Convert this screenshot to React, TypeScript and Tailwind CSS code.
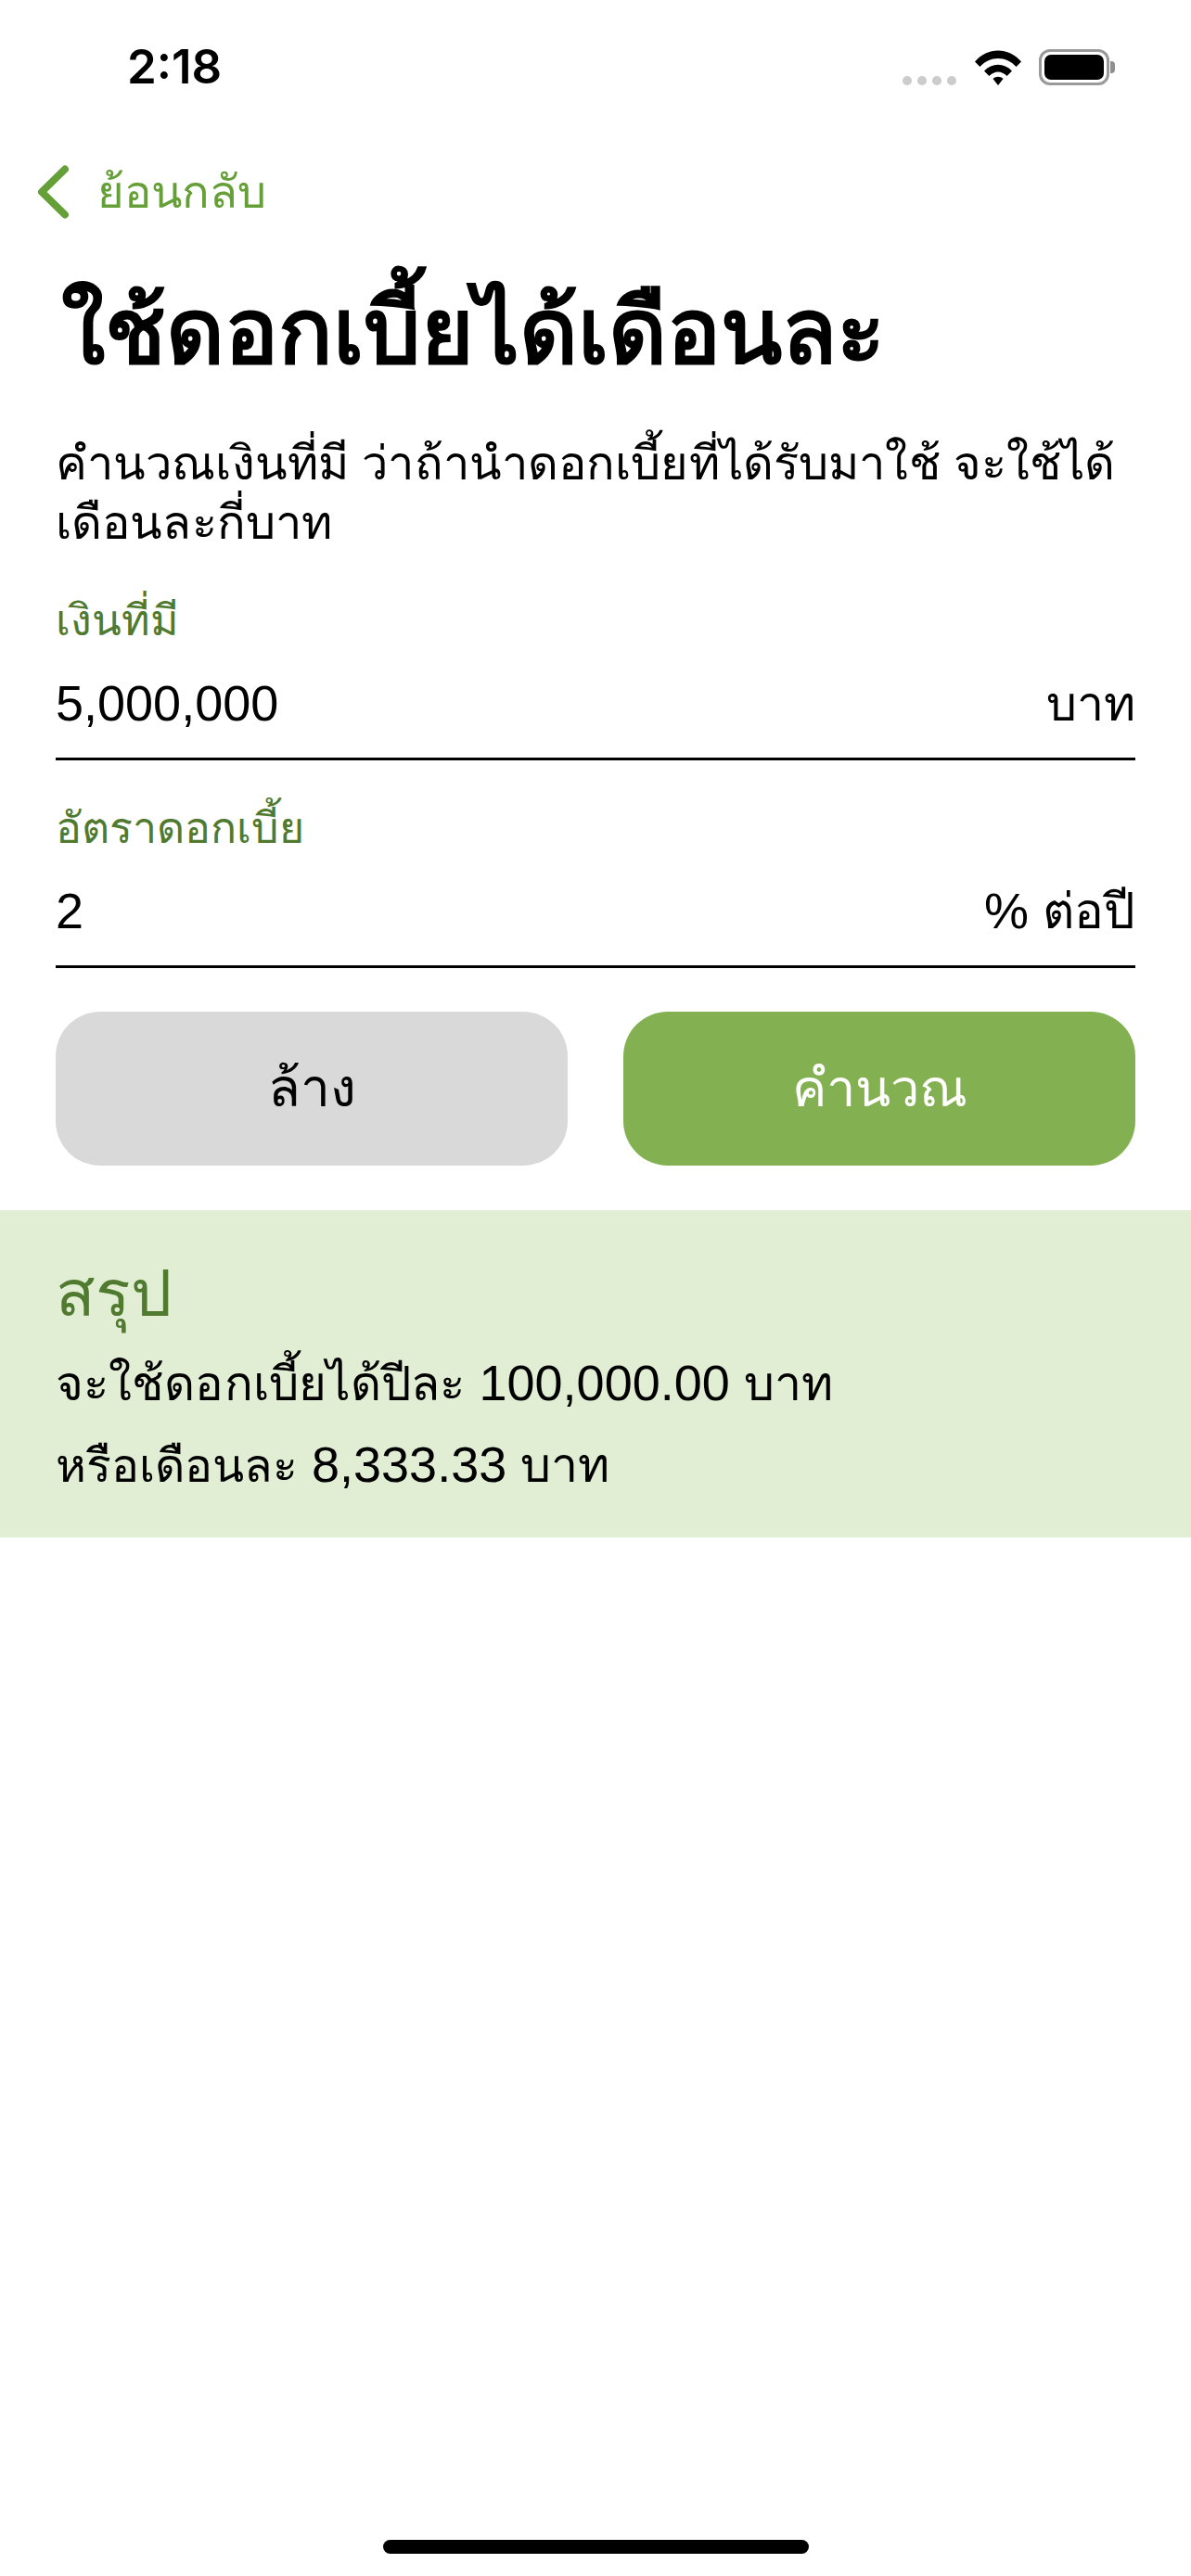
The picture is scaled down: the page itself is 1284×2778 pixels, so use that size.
function Wifi() {
  return (
    <svg width="50" height="38" viewBox="0 0 50 38" fill="black">
      <path d="M0 12.5 C13.5 -3.5 36.5 -3.5 50 12.5 L44.6 18 C33.5 6 16.5 6 5.4 18 Z" />
      <path d="M10 22.5 C18.5 13.5 31.5 13.5 40 22.5 L34.6 28 C28.5 22 21.5 22 15.4 28 Z" />
      <path d="M19.5 31 C22.5 28 27.5 28 30.5 31 L25 38 Z" />
    </svg>
  );
}
function Battery() {
  return (
    <div className="flex items-center">
      <div className="w-[76px] h-[39px] rounded-[12px] border-[3px] border-[#999999] p-[3px]">
        <div className="w-full h-full rounded-[7px] bg-black" />
      </div>
      <div className="ml-[1px] w-[5px] h-[13px] rounded-r-[4px] bg-[#8f8f8f]" />
    </div>
  );
}
function Field({ label, value, unit }: { label: string; value: string; unit: React.ReactNode }) {
  return (
    <div className="mx-[60px] border-b-[3px] border-black">
      <div className="h-[60px] text-[46.5px] leading-[62px] text-[#4f7a2f]">{label}</div>
      <div className="flex justify-between h-[119px] text-[54px] leading-[120px] text-black">
        <span>{value}</span>
        <span>{unit}</span>
      </div>
    </div>
  );
}
export default function App() {
  return (
    <div className="w-[1284px] h-[2778px] bg-white flex flex-col font-['Liberation_Sans','Noto_Sans',sans-serif]">
      <div className="h-[157px] pt-[44px] pl-[137px] pr-[82px] flex justify-between items-start">
        <span className="text-[51px] leading-[56px] font-semibold text-black font-['Inter',sans-serif]">2:18</span>
        <div className="flex items-end pt-[9px] h-[48px]">
          <div className="flex gap-[6px]">
            <span className="w-[10px] h-[10px] rounded-full bg-[#cccccc]" />
            <span className="w-[10px] h-[10px] rounded-full bg-[#cccccc]" />
            <span className="w-[10px] h-[10px] rounded-full bg-[#cccccc]" />
            <span className="w-[10px] h-[10px] rounded-full bg-[#cccccc]" />
          </div>
          <div className="ml-[20px]"><Wifi /></div>
          <div className="ml-[19px]"><Battery /></div>
        </div>
      </div>
      <div className="h-[100px] pl-[39px] flex items-center text-[#659f37]">
        <svg width="36" height="60" viewBox="0 0 36 60" fill="none" stroke="#659f37" strokeWidth="8" strokeLinecap="round" strokeLinejoin="round">
          <path d="M31 5.5 L6 30 L31 54.5" />
        </svg>
        <span className="ml-[30px] text-[49px] leading-[70px]">ย้อนกลับ</span>
      </div>
      <h1 className="mt-[41px] pl-[66px] text-[97px] leading-[120px] font-bold text-black">ใช้ดอกเบี้ยได้เดือนละ</h1>
      <p className="mt-[50px] px-[60px] text-[50.7px] tracking-[0.12px] leading-[64px] text-black">
        คำนวณเงินที่มี ว่าถ้านำดอกเบี้ยที่ได้รับมาใช้ จะใช้ได้เดือนละกี่บาท
      </p>
      <div className="mt-[42px]">
        <Field label="เงินที่มี" value="5,000,000" unit={<span className="text-[52px]">บาท</span>} />
      </div>
      <div className="mt-[42px]">
        <Field label="อัตราดอกเบี้ย" value="2" unit={<>% <span className="text-[53px]">ต่อปี</span></>} />
      </div>
      <div className="mt-[47px] mx-[60px] flex gap-[60px] text-[56px]">
        <button className="flex-1 h-[166px] rounded-[48px] bg-[#d9d9d9] text-black text-[57px]">ล้าง</button>
        <button className="flex-1 h-[166px] rounded-[48px] bg-[#83b152] text-white">คำนวณ</button>
      </div>
      <section className="mt-[48px] h-[353px] bg-[#e2eed4] px-[60px] pt-[50px]">
        <h2 className="text-[70px] leading-[80px] text-[#4f7a2f]">สรุป</h2>
        <div className="mt-[13px] text-[54px] leading-[86px] text-black">
          <div><span className="text-[51px] tracking-[0.1px]">จะใช้ดอกเบี้ยได้ปีละ</span> 100,000.00 <span className="text-[52px]">บาท</span></div>
          <div><span className="text-[50px]">หรือเดือนละ</span> 8,333.33 <span className="text-[52px]">บาท</span></div>
        </div>
      </section>
      <div className="mt-auto mb-[24px] self-center ml-[1px] w-[459px] h-[15px] rounded-full bg-black" />
    </div>
  );
}
